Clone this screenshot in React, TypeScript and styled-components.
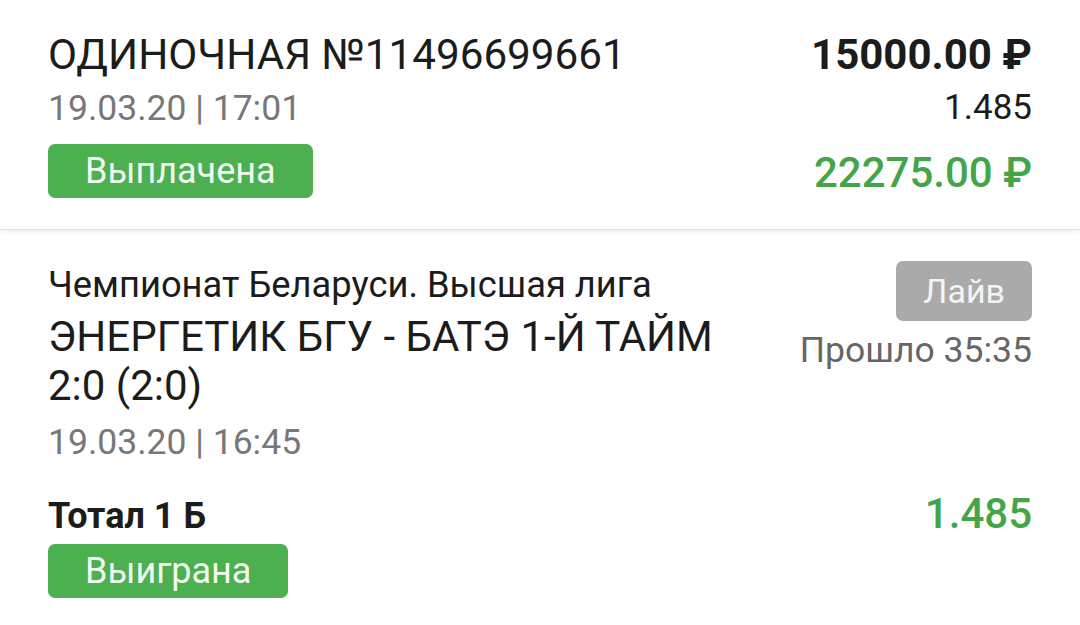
import React from 'react'
import styled, { createGlobalStyle } from 'styled-components'

const GlobalStyle = createGlobalStyle`
  html, body {
    margin: 0;
    padding: 0;
    background: #ffffff;
  }
  body {
    font-family: Roboto, "Noto Sans", "Liberation Sans", sans-serif;
    color: #1c1c1c;
    -webkit-font-smoothing: antialiased;
  }
`

const GREEN = '#4caf50'
const GREEN_TEXT = '#43a547'

type BetEvent = {
  league: string
  teams: string
  score: string
  date: string
  elapsed: string
  market: string
  odds: string
  result: string
}

const bet = {
  title: 'ОДИНОЧНАЯ №11496699661',
  date: '19.03.20 | 17:01',
  stake: '15000.00 ₽',
  odds: '1.485',
  payout: '22275.00 ₽',
  status: 'Выплачена',
}

const event: BetEvent = {
  league: 'Чемпионат Беларуси. Высшая лига',
  teams: 'ЭНЕРГЕТИК БГУ - БАТЭ 1-Й ТАЙМ',
  score: '2:0 (2:0)',
  date: '19.03.20 | 16:45',
  elapsed: 'Прошло 35:35',
  market: 'Тотал 1 Б',
  odds: '1.485',
  result: 'Выиграна',
}

export default function App() {
  return (
    <>
      <GlobalStyle />
      <Page>
        <SummaryCard>
          <Title>{bet.title}</Title>
          <Amount>{bet.stake}</Amount>
          <DateText>{bet.date}</DateText>
          <Coef>{bet.odds}</Coef>
          <StatusCell>
            <Badge>{bet.status}</Badge>
          </StatusCell>
          <Payout>{bet.payout}</Payout>
        </SummaryCard>

        <EventCard>
          <EventHeader>
            <EventInfo>
              <League>{event.league}</League>
              <Teams>
                {event.teams}
                <br />
                {event.score}
              </Teams>
              <DateText>{event.date}</DateText>
            </EventInfo>
            <LiveInfo>
              <Badge $tone="gray">Лайв</Badge>
              <Elapsed>{event.elapsed}</Elapsed>
            </LiveInfo>
          </EventHeader>

          <MarketRow>
            <Market>{event.market}</Market>
            <EventOdds>{event.odds}</EventOdds>
          </MarketRow>
          <Badge>{event.result}</Badge>
        </EventCard>
      </Page>
    </>
  )
}

const Page = styled.div`
  width: 1080px;
  height: 625px;
  overflow: hidden;
  background: #ffffff;
`

const SummaryCard = styled.section`
  position: relative;
  z-index: 1;
  display: grid;
  grid-template-columns: 1fr auto;
  grid-template-rows: 50px 40px auto;
  row-gap: 8px;
  align-items: center;
  padding: 30px 48px 31px 48px;
  background: #ffffff;
  border-bottom: 1px solid #e2e2e2;
  box-shadow: 0 2px 5px rgba(0, 0, 0, 0.07);

  & > :nth-child(5),
  & > :nth-child(6) {
    margin-top: 8px;
  }
`

const Title = styled.div`
  font-size: 42.2px;
  line-height: 50px;
  font-weight: 400;
  color: #1c1c1c;
  white-space: nowrap;
`

const Amount = styled.div`
  font-size: 42px;
  line-height: 50px;
  font-weight: 700;
  color: #1c1c1c;
  text-align: right;
`

const DateText = styled.div`
  font-size: 35.5px;
  line-height: 40px;
  color: #777777;
`

const Coef = styled.div`
  font-size: 35px;
  line-height: 40px;
  color: #1c1c1c;
  text-align: right;
`

const StatusCell = styled.div`
  display: flex;
`

const Payout = styled.div`
  font-size: 42px;
  line-height: 50px;
  font-weight: 500;
  color: ${GREEN_TEXT};
  text-align: right;
  padding-top: 4px;
`

const Badge = styled.div<{ $tone?: 'green' | 'gray' }>`
  display: inline-flex;
  align-items: center;
  justify-content: center;
  align-self: ${(p) => (p.$tone === 'gray' ? 'flex-end' : 'flex-start')};
  height: ${(p) => (p.$tone === 'gray' ? '60px' : '54px')};
  padding: 0 ${(p) => (p.$tone === 'gray' ? '27px' : '37px')};
  border-radius: 7px;
  background: ${(p) => (p.$tone === 'gray' ? '#aaaaaa' : GREEN)};
  color: ${(p) => (p.$tone === 'gray' ? '#f4f4f4' : '#f1faf1')};
  font-size: ${(p) => (p.$tone === 'gray' ? '34px' : '36px')};
  line-height: 1;
  box-sizing: border-box;
`

const EventCard = styled.section`
  display: flex;
  flex-direction: column;
  padding: 31px 48px 0 48px;
`

const EventHeader = styled.div`
  display: flex;
  justify-content: space-between;
  align-items: flex-start;
`

const EventInfo = styled.div`
  display: flex;
  flex-direction: column;
  padding-top: 4px;
`

const League = styled.div`
  font-size: 36.3px;
  line-height: 40px;
  color: #1c1c1c;
`

const Teams = styled.div`
  margin-top: 7px;
  font-size: 42px;
  line-height: 49px;
  color: #1c1c1c;
  margin-bottom: 12px;
`

const LiveInfo = styled.div`
  display: flex;
  flex-direction: column;
  align-items: flex-end;
  gap: 9px;
`

const Elapsed = styled.div`
  font-size: 35.5px;
  line-height: 40px;
  color: #666666;
`

const MarketRow = styled.div`
  display: flex;
  justify-content: space-between;
  align-items: baseline;
  margin-top: 32px;
  margin-bottom: 8px;
`

const Market = styled.div`
  font-size: 36px;
  line-height: 40px;
  font-weight: 700;
  color: #1c1c1c;
`

const EventOdds = styled.div`
  font-size: 42px;
  line-height: 40px;
  font-weight: 500;
  color: ${GREEN_TEXT};
`
